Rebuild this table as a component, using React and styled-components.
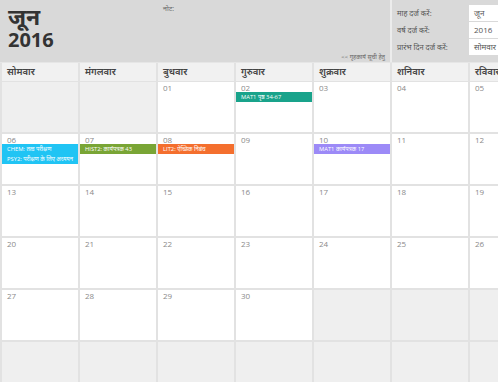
import React from "react";
import styled, { createGlobalStyle } from "styled-components";

const Global = createGlobalStyle`
  html, body { margin: 0; padding: 0; background: #ffffff; }
  body { font-family: "Open Sans", "Noto Sans", "Noto Sans Devanagari", sans-serif; }
  #root { width: 498px; height: 382px; overflow: hidden; }
`;

const Page = styled.div`
  width: 498px;
  height: 382px;
  overflow: hidden;
  background: #ffffff;
`;

const TopBar = styled.header`
  display: flex;
  height: 62px;
  background: #d9d9d9;
  width: 546px;
`;

const TitleArea = styled.div`
  display: flex;
  width: 390px;
`;

const MonthBlock = styled.div`
  width: 155px;
  padding: 3px 0 0 8px;
  box-sizing: border-box;
  color: #333333;
`;

const MonthName = styled.div`
  font-size: 23px;
  line-height: 27px;
  font-weight: 700;
`;

const YearName = styled.div`
  font-size: 20px;
  line-height: 20px;
  font-weight: 700;
`;

const NoteColumn = styled.div`
  flex: 1;
  display: flex;
  flex-direction: column;
  justify-content: space-between;
  padding: 4px 5px 1px 8px;
`;

const NoteLabel = styled.div`
  font-size: 7px;
  line-height: 9px;
  color: #666666;
`;

const HomeworkHint = styled.div`
  align-self: flex-end;
  font-size: 6px;
  line-height: 8px;
  color: #666666;
`;

const SettingsPanel = styled.div`
  border-left: 2px solid #ececec;
  padding: 5px 0 0 5px;
  display: grid;
  grid-template-columns: 72px 70px;
  grid-auto-rows: 16px;
  row-gap: 1px;
  align-content: start;
`;

const SettingLabel = styled.div`
  font-size: 7.5px;
  line-height: 16px;
  color: #555555;
  white-space: nowrap;
`;

const SettingInput = styled.div`
  background: #ffffff;
  font-size: 8px;
  line-height: 16px;
  padding-left: 5px;
  color: #555555;
`;

const WeekHeader = styled.div`
  display: grid;
  grid-template-columns: repeat(7, 76px);
  column-gap: 2px;
  width: max-content;
  padding-left: 2px;
  background: #e2e2e2;
  border-top: 1px solid #e6e6e6;
  border-bottom: 1px solid #e2e2e2;
`;

const DayName = styled.div`
  background: #f1f1f1;
  height: 18px;
  line-height: 18px;
  font-size: 9.5px;
  font-weight: 600;
  color: #444444;
  padding-left: 5px;
  white-space: nowrap;
  overflow: hidden;
`;

const MonthGrid = styled.div`
  display: grid;
  grid-template-columns: repeat(7, 76px);
  grid-auto-rows: 50px;
  gap: 2px;
  width: max-content;
  padding-left: 2px;
  background: #e2e2e2;
`;

const Cell = styled.div`
  background: ${(p) => (p.$empty ? "#efefef" : "#ffffff")};
  display: flex;
  flex-direction: column;
  overflow: hidden;
`;

const DayNumber = styled.div`
  height: 10px;
  line-height: 11px;
  font-size: 8px;
  color: #8a8a8a;
  padding-left: 5px;
`;

const EventBar = styled.div`
  height: 10px;
  line-height: 10px;
  font-size: 5.8px;
  color: #ffffff;
  background: ${(p) => p.$color};
  padding-left: 5px;
  white-space: nowrap;
  overflow: hidden;
`;

const COLORS = {
  teal: "#19a38b",
  blue: "#20c4f4",
  green: "#79a535",
  orange: "#f46f2e",
  purple: "#9c8af7",
};

const events = {
  2: [{ t: "MAT1 पृष्ठ 34-67", c: COLORS.teal }],
  6: [
    { t: "CHEM: तत्व परीक्षण", c: COLORS.blue },
    { t: "PSY2: परीक्षण के लिए अध्ययन", c: COLORS.blue },
  ],
  7: [{ t: "HIST2: कार्यपत्रक 43", c: COLORS.green }],
  8: [{ t: "LIT2: ऐच्छिक निबंध", c: COLORS.orange }],
  10: [{ t: "MAT1 कार्यपत्रक 17", c: COLORS.purple }],
};

const weekdays = ["सोमवार", "मंगलवार", "बुधवार", "गुरुवार", "शुक्रवार", "शनिवार", "रविवार"];

const days = [];
for (let i = 0; i < 42; i++) {
  const d = i - 1;
  days.push(d >= 1 && d <= 30 ? d : null);
}

export default function App() {
  return (
    <Page>
      <Global />
      <TopBar>
        <TitleArea>
          <MonthBlock>
            <MonthName>जून</MonthName>
            <YearName>2016</YearName>
          </MonthBlock>
          <NoteColumn>
            <NoteLabel>नोट:</NoteLabel>
            <HomeworkHint>&lt;&lt; गृहकार्य सूची हेतु</HomeworkHint>
          </NoteColumn>
        </TitleArea>
        <SettingsPanel>
          <SettingLabel>माह दर्ज करें:</SettingLabel>
          <SettingInput>जून</SettingInput>
          <SettingLabel>वर्ष दर्ज करें:</SettingLabel>
          <SettingInput>2016</SettingInput>
          <SettingLabel>प्रारंभ दिन दर्ज करें:</SettingLabel>
          <SettingInput>सोमवार</SettingInput>
        </SettingsPanel>
      </TopBar>
      <WeekHeader>
        {weekdays.map((w) => (
          <DayName key={w}>{w}</DayName>
        ))}
      </WeekHeader>
      <MonthGrid>
        {days.map((d, i) => (
          <Cell key={i} $empty={d === null}>
            {d !== null && <DayNumber>{String(d).padStart(2, "0")}</DayNumber>}
            {d !== null &&
              (events[d] || []).map((e) => (
                <EventBar key={e.t} $color={e.c}>
                  {e.t}
                </EventBar>
              ))}
          </Cell>
        ))}
      </MonthGrid>
    </Page>
  );
}
